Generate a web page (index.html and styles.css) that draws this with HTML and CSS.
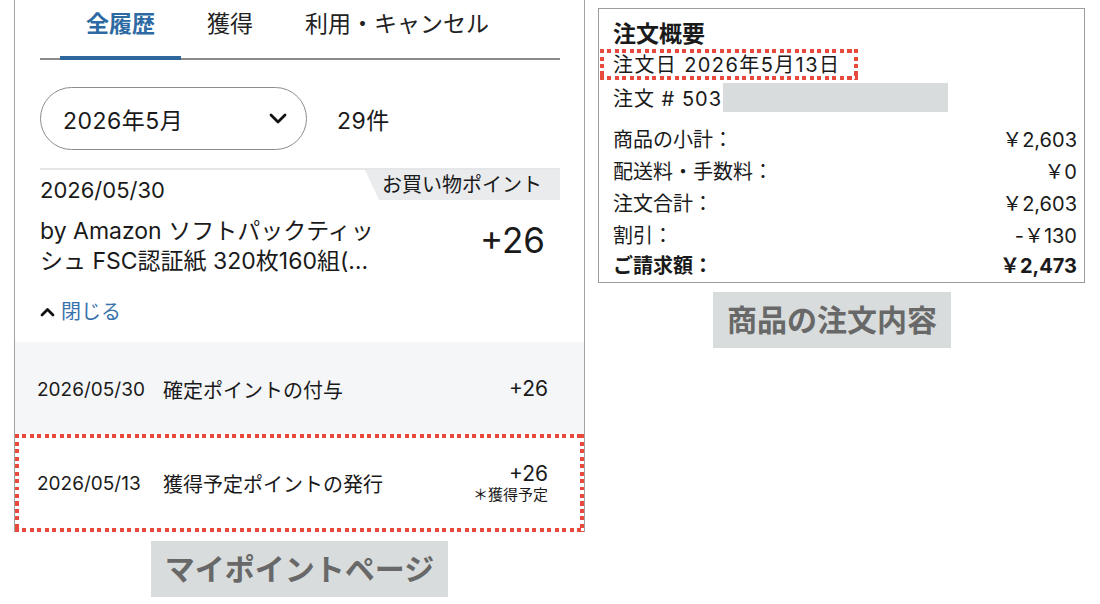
FILE: index.html
```html
<!DOCTYPE html>
<html lang="ja">
<head>
  <meta charset="UTF-8">
  <title>ポイント履歴と注文概要</title>
  <link rel="stylesheet" href="styles.css">
</head>
<body>
  <div class="page">
    <div class="column left">
      <div class="points">
        <div class="tabs">
          <div class="tab active">全履歴</div>
          <div class="tab">獲得</div>
          <div class="tab">利用・キャンセル</div>
        </div>

        <div class="filter">
          <div class="select">
            <span>2026年5月</span>
            <svg class="chevron" width="18" height="11" viewBox="0 0 18 11">
              <path d="M2 2 L9 9 L16 2" fill="none" stroke="#111" stroke-width="2.8" stroke-linecap="round" stroke-linejoin="round"/>
            </svg>
          </div>
          <div class="count">29件</div>
        </div>

        <div class="item">
          <div class="badge">お買い物ポイント</div>
          <div class="item-date">2026/05/30</div>
          <div class="item-body">
            <div class="item-title">by Amazon ソフトパックティッシュ FSC認証紙 320枚160組(…</div>
            <div class="item-points">+26</div>
          </div>
          <a class="toggle" href="#">
            <svg width="15" height="10" viewBox="0 0 15 10">
              <path d="M2 8 L7.5 2.5 L13 8" fill="none" stroke="#111" stroke-width="2.8" stroke-linecap="round" stroke-linejoin="round"/>
            </svg>
            閉じる
          </a>
        </div>

        <div class="history shaded">
          <span class="h-date">2026/05/30</span>
          <span class="h-text">確定ポイントの付与</span>
          <span class="h-points">+26</span>
        </div>
        <div class="history marked">
          <span class="h-date">2026/05/13</span>
          <span class="h-text">獲得予定ポイントの発行</span>
          <span class="h-points">+26<small>＊獲得予定</small></span>
        </div>
      </div>
      <div class="caption center">マイポイントページ</div>
    </div>

    <div class="column right">
      <div class="summary">
        <h2>注文概要</h2>
        <div class="order-date marked">注文日 2026年5月13日</div>
        <div class="order-no">注文 # 503<span class="mask"></span></div>
        <div class="rows">
          <div class="row"><span>商品の小計：</span><span>￥2,603</span></div>
          <div class="row"><span>配送料・手数料：</span><span>￥0</span></div>
          <div class="row"><span>注文合計：</span><span>￥2,603</span></div>
          <div class="row"><span>割引：</span><span>-￥130</span></div>
          <div class="row total"><span>ご請求額：</span><span>￥2,473</span></div>
        </div>
      </div>
      <div class="caption offset">商品の注文内容</div>
    </div>
  </div>
</body>
</html>
```

FILE: styles.css
```css
body {
  margin: 0;
  background: #fff;
  color: #1a1a1a;
  font-family: Inter, 'Noto Sans CJK JP', sans-serif;
}
.page {
  display: flex;
  gap: 13px;
  padding-left: 14px;
}
.column {
  display: flex;
  flex-direction: column;
}

/* point history */
.points {
  width: 571px;
  box-sizing: border-box;
  border: 1px solid #a3a3a3;
  border-top: none;
  border-bottom: none;
}
.tabs {
  display: flex;
  margin: 0 24px 0 25px;
  padding: 7px 0 0 20px;
  border-bottom: 2px solid #8a8a8a;
}
.tab {
  padding: 0 26px 17px;
  font-size: 23px;
  line-height: 34px;
  color: #222;
}
.tab.active {
  color: #2d6aa3;
  font-weight: bold;
  border-bottom: 4px solid #2d679e;
  margin-bottom: -2px;
  padding-bottom: 15px;
}
.filter {
  display: flex;
  align-items: center;
  margin: 27px 25px 0;
}
.select {
  width: 267px;
  height: 63px;
  box-sizing: border-box;
  border: 1px solid #8c8c8c;
  border-radius: 32px;
  display: flex;
  align-items: center;
  justify-content: space-between;
  padding: 0 19px 0 22px;
  font-size: 23px;
  letter-spacing: 0.5px;
}
.count {
  margin-left: 30px;
  font-size: 23px;
  letter-spacing: 0.5px;
}
.item {
  position: relative;
  margin: 18px 24px 0 25px;
  padding: 5px 0 15px;
  border-top: 2px solid #e4e6e8;
}
.badge {
  position: absolute;
  top: 0;
  right: 0;
  height: 30px;
  padding: 0 18px 0 17px;
  background: #e9ebed;
  font-size: 20px;
  line-height: 30px;
  clip-path: polygon(0 0, 100% 0, 100% 100%, 14px 100%);
}
.item-date {
  font-size: 22px;
  line-height: 30px;
}
.item-body {
  display: flex;
  align-items: center;
  justify-content: space-between;
  margin-top: 11px;
}
.item-title {
  width: 352px;
  font-size: 23px;
  line-height: 30px;
}
.item-points {
  margin-right: 15px;
  margin-top: -12px;
  font-size: 35px;
}
.toggle {
  display: inline-flex;
  align-items: center;
  gap: 6px;
  margin-top: 21px;
  font-size: 20px;
  line-height: 30px;
  color: #3a72ad;
  text-decoration: none;
}
.history {
  display: flex;
  align-items: center;
  font-size: 19px;
}
.history.shaded {
  height: 90px;
  padding: 2px 36px 0 22px;
  background: #f5f6f8;
}
.history.marked {
  height: 98px;
  padding: 0 36px 0 22px;
}
.h-date {
  width: 126px;
}
.h-text {
  font-size: 20px;
}
.h-points {
  margin-left: auto;
  display: flex;
  flex-direction: column;
  align-items: flex-end;
  font-size: 21px;
  line-height: 24px;
}
.h-points small {
  font-size: 15px;
  line-height: 18px;
}

/* red dotted highlight */
.marked {
  box-sizing: border-box;
  background:
    repeating-linear-gradient(90deg, #e8493d 0 4px, transparent 4px 7.5px) top left / 100% 4px no-repeat,
    repeating-linear-gradient(90deg, #e8493d 0 4px, transparent 4px 7.5px) bottom left / 100% 4px no-repeat,
    repeating-linear-gradient(180deg, #e8493d 0 4px, transparent 4px 7.5px) top left / 4px 100% no-repeat,
    repeating-linear-gradient(180deg, #e8493d 0 4px, transparent 4px 7.5px) top right / 4px 100% no-repeat;
}

/* grey captions */
.caption {
  margin-top: 9px;
  height: 56px;
  padding: 0 14px;
  background: #d8dcdc;
  color: #686868;
  font-size: 30px;
  font-weight: bold;
  line-height: 56px;
}
.caption.center {
  align-self: center;
}
.caption.offset {
  align-self: flex-start;
  margin-left: 115px;
}

/* order summary */
.summary {
  margin-top: 8px;
  width: 487px;
  height: 275px;
  box-sizing: border-box;
  border: 1px solid #9c9c9c;
  padding: 10px 7px 0 14px;
}
.summary h2 {
  margin: 0;
  font-size: 23px;
  line-height: 30px;
}
.order-date {
  display: inline-block;
  margin-left: -13px;
  padding: 5px 18px 4px 13px;
  font-size: 20px;
  line-height: 22px;
  letter-spacing: 1.4px;
}
.order-no {
  display: flex;
  align-items: center;
  height: 30px;
  margin-top: 2px;
  font-size: 20px;
  letter-spacing: 1px;
}
.mask {
  display: inline-block;
  width: 225px;
  height: 29px;
  margin-left: 1px;
  background: #d8dcdc;
}
.rows {
  margin-top: 12px;
}
.row {
  display: flex;
  justify-content: space-between;
  font-size: 20px;
  line-height: 32px;
}
.row.total {
  font-weight: bold;
  line-height: 28px;
}
```
